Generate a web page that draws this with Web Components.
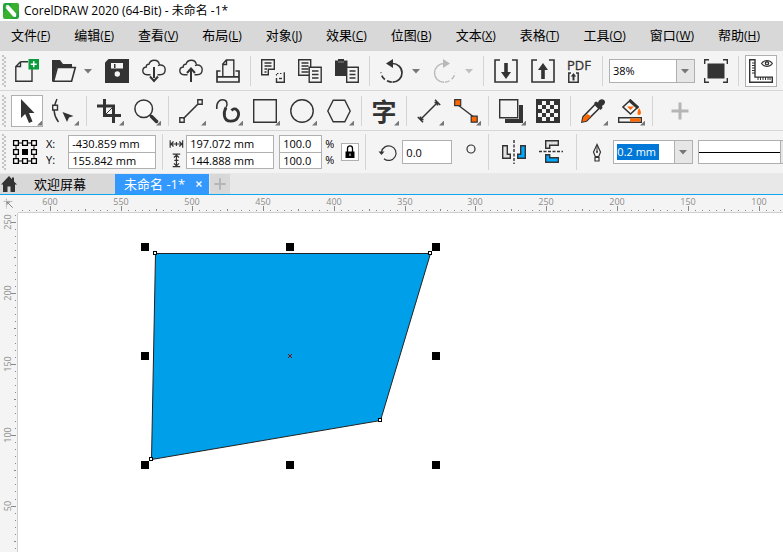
<!DOCTYPE html>
<html lang="zh-CN">
<head>
<meta charset="utf-8">
<title>CorelDRAW 2020 (64-Bit) - 未命名 -1*</title>
<style>
html, body { margin: 0; height: 100%; background: #fff; overflow: hidden; }
body { font: 11px/16px "Open Sans", "Noto Sans CJK SC", sans-serif; color: #000; }
</style>
</head>
<body>
<cd-app></cd-app>
<script>
const S = 'fill="none" stroke="#333" stroke-width="1.4"';
const ICONS = {
  new: `<path d="M5.5 2.7H13M17 10v12.3H.8V7.5L5.5 2.7M5.5 2.7V7.5H1" ${S}/><path d="M13.5 0h10.5v10.5H13.5z" fill="#0a9b3c"/><path d="M18.7 2.2v6M15.7 5.2h6" stroke="#fff" stroke-width="1.5"/>`,
  open: `<path d="M0 22V1h8l3 4h9v3H5L1 23z" fill="#333"/><path d="M5.3 8.5h18L19.6 22.3H1.6z" fill="#f4f4f4" stroke="#333" stroke-width="1.6"/>`,
  save: `<path d="M0 3.5L3.500 0H24v24H0z" fill="#333"/><path d="M6 4h12v5.500H6z" fill="#f4f4f4"/><path d="M9 5h1.500v4H9z" fill="#333"/><circle cx="12.300" cy="15" r="2.700" fill="#f4f4f4"/>`,
  clouddown: `<path d="M8.500 15.800H5C2.500 15.500.8 14 .8 11.800.8 9.600 2.300 8.200 4.300 8 4 6.400 5 5 6.900 5.200 7.800 2.500 9.700 1.200 12.200 1.200c3 0 4.900 2 5.200 4.800 3.500-.4 5.800 1.600 5.800 4.600 0 2.900-1.900 5.200-5.200 5.200h-2.500M17.400 6l-1.400.6" ${S}/><path d="M12 8v11" stroke="#333" stroke-width="2"/><path d="M8 17.500L12 22l4-4.500" fill="none" stroke="#333" stroke-width="2"/>`,
  cloudup: `<path d="M8.500 15.800H5C2.500 15.500.8 14 .8 11.800.8 9.600 2.300 8.200 4.300 8 4 6.400 5 5 6.900 5.200 7.800 2.500 9.700 1.200 12.200 1.200c3 0 4.900 2 5.200 4.800 3.500-.4 5.800 1.600 5.800 4.600 0 2.900-1.900 5.200-5.200 5.200h-2.500M17.400 6l-1.400.6" ${S}/><path d="M12 10v13" stroke="#333" stroke-width="2"/><path d="M8 14l4-4.500 4 4.500" fill="none" stroke="#333" stroke-width="2"/>`,
  print: `<path d="M6.800 17V5l3.500-4h7.500v16M10.500 1v4.500H7" ${S}/><path d="M4.500 12H1v11h22V12h-3.500M1 17.800h22" fill="none" stroke="#333" stroke-width="1.700"/>`,
  cut: `<path d="M.7.700h12.600v9.600H7.300v5.500H.7z" ${S}/><path d="M3.500 4h7M3.500 7h7M3.500 10h2.500M3.500 13h2" ${S}/><path d="M16 14.500h6M15.500 15v2" fill="none" stroke="#333" stroke-width="1.200" stroke-dasharray="1.500 1.500"/><path d="M15.500 19v4.300h7.800v-10" ${S}/><path d="M18 19.500h3" ${S}/>`,
  copy: `<path d="M.7.700h12v15.600H.7z" ${S}/><path d="M3.500 4h7M3.500 7h7M3.500 10h7M3.500 13h7" ${S} /><path d="M11.200 8.200h12v15h-12z" fill="#f4f4f4" stroke="#333" stroke-width="1.400"/><path d="M14 12h6.500M14 15.500h6.500M14 19h6.500" ${S}/>`,
  paste: `<path d="M0 1.500h3V0h6v1.500h3.500V8H11v9H0z" fill="#333"/><path d="M3 3h6" stroke="#888"/><path d="M11.700 8.200h11.600v15H11.700z" fill="#f4f4f4" stroke="#333" stroke-width="1.400"/><path d="M14.500 12h6M14.500 15.500h6M14.500 19h6" ${S}/>`,
  undo: `<path d="M9 4.500h3.500c5 0 9.500 4 9.500 9.300 0 5.200-4 9.400-9.500 9.400" fill="none" stroke="#333" stroke-width="1.700"/><path d="M11.800 23.200C6 22.500 1.500 19 1 13.500" fill="none" stroke="#333" stroke-width="1.700" stroke-dasharray="5 2.500"/><path d="M6 4.500L13 0v9z" fill="#333"/>`,
  redo: `<path d="M14 4.500h-3c-5 0-9.500 4-9.500 9.300 0 5.200 4 9.400 9.500 9.400" fill="none" stroke="#b9b9b9" stroke-width="1.400"/><path d="M11.800 23.200C17.500 22.500 21.500 19 22 13.500" fill="none" stroke="#b9b9b9" stroke-width="1.400" stroke-dasharray="5 2.500"/><path d="M17 4.500L10 0v9z" fill="#b9b9b9"/>`,
  import: `<path d="M6 1H1v22h22V1h-5" fill="none" stroke="#333" stroke-width="1.600"/><path d="M10.200 4h3.600v9H17l-5 7-5-7h3.200z" fill="#333"/>`,
  export: `<path d="M6 1H1v22h22V1h-5" fill="none" stroke="#333" stroke-width="1.600"/><path d="M10.200 20h3.600v-9H17l-5-7-5 7h3.200z" fill="#333"/>`,
  pdf: `<text x="-1" y="11" font-family="Open Sans, sans-serif" font-size="13" fill="#333" stroke="#333" stroke-width="0.300">PDF</text><path d="M3 14H.800v9.200h9.400V14H8" fill="none" stroke="#333" stroke-width="1.500"/><path d="M4.500 21.500V17.500H2.800L5.500 14l2.700 3.500H6.500v4z" fill="#333"/>`,
  full: `<path d="M3.500 4.500h17v15h-17z" fill="#333"/><path d="M.7 5V.7H5M19 .7h4.300V5M23.300 19v4.300H19M5 23.300H.7V19" ${S}/>`,
  ruler: `<path d="M.7.700H6v17.400h17.300v5.200H.7z" ${S}/><path d="M3 4h3M3 6.500h3M3 9h3M3 11.500h3M3 14h3M9 18v3M11.500 18v3M14 18v3M16.500 18v3M19 18v3M21 18v3" stroke="#333" stroke-width="1"/><path d="M12.500 4.500c3-4 8-4 10.900 0-3 4-8 4-10.900 0z" fill="none" stroke="#333" stroke-width="1.200"/><circle cx="18" cy="4.300" r="1.600" ${S}/>`,
  pick: `<path d="M6 0v19l4.200-4 3.800 9 3.500-1.500L14 14h5.500z" fill="#333"/>`,
  shape: `<path d="M5 0C1 8 1 16 6.500 23" ${S}/><path d="M.7 6.200h4.800V11H.7z" fill="#f4f4f4" stroke="#333" stroke-width="1.400"/><path d="M10.500 13l11 4-4.500 1.500-2 4.500z" fill="#333"/>`,
  crop: `<path d="M0 7h16.500V24M7.500 0v16.500H24" fill="none" stroke="#333" stroke-width="3"/><path d="M17 7L8 16" stroke="#333" stroke-width="1"/>`,
  zoom: `<circle cx="9.700" cy="9.700" r="8.800" fill="#f8f8f8" stroke="#333" stroke-width="1.500"/><path d="M16 16l2 2" stroke="#333" stroke-width="2"/><path d="M17.500 17.500l5 5" stroke="#333" stroke-width="3.500" stroke-linecap="round"/>`,
  line: `<path d="M4.500 19.500l14-14" stroke="#333" stroke-width="1.600"/><path d="M.8 18.800h4.400v4.400H.8zM18.800.800h4.400v4.400h-4.400z" ${S}/>`,
  curve: `<path d="M.8 10C0 3.500 3.500.8 6.500.8 11 .8 12 4.500 10 8.500" fill="none" stroke="#333" stroke-width="1.500"/><path d="M10 8.500C7 14 7.500 22.200 14.500 22.200c8.500 0 9.500-8 6.500-11.200-1.800-1.700-4-1.200-5.500.5" fill="none" stroke="#333" stroke-width="2.800"/>`,
  rect: `<path d="M.7.700h22.600v22.600H.7z" ${S}/>`,
  ellipse: `<circle cx="12" cy="12" r="11.200" ${S}/>`,
  hexagon: `<path d="M6.200 1.200h11.600L23.200 12l-5.400 10.800H6.200L.8 12z" ${S}/>`,
  text: `<text x="-0.500" y="21.500" font-family="Noto Sans CJK SC, sans-serif" font-weight="700" font-size="25" fill="#333">字</text>`,
  dimension: `<path d="M3.500 20.500l17-17M.8 18l5.200 5.200M18 .8l5.200 5.200M3.500 17.500v3h3M17.500 3.500h3v3" fill="none" stroke="#333" stroke-width="1.500"/>`,
  connector: `<path d="M4 6l17 13" stroke="#333" stroke-width="1.400"/><path d="M.7.700h6v6h-6zM17.200 17.200h6v6h-6z" fill="#f60" stroke="#333" stroke-width="1.200"/>`,
  shadow: `<path d="M6 21h18V6h-4v14H6z" fill="#333"/><path d="M6 21h18v3H6zM21 6h3v18h-3z" fill="#333"/><path d="M.7.700h18v18H.7z" fill="#f4f4f4" stroke="#333" stroke-width="1.400"/>`,
  checker: `<path d="M0 0h24v24H0z" fill="#333"/><path d="M6 2h4v4H6zM14 2h4v4h-4zM2 6h4v4H2zM10 6h4v4h-4zM18 6h4v4h-4zM6 10h4v4H6zM14 10h4v4h-4zM2 14h4v4H2zM10 14h4v4h-4zM18 14h4v4h-4zM6 18h4v4H6zM14 18h4v4h-4z" fill="#f4f4f4"/>`,
  dropper: `<path d="M14 5.500L2 18l-1 5 4.500-1L18 9.500z" fill="#f8f8f8" stroke="#333" stroke-width="1.600"/><path d="M6 15l-4 4-.7 3.700L5 22l5-5z" fill="#f60"/><path d="M13 4l2-1.500 2 1C18 .500 21-.5 23 1s1 4.500-2 6l.500 2-2 2z" fill="#333"/>`,
  fill: `<path d="M12.500 1L20 8l-7.500 7L5 8z" fill="#f8f8f8" stroke="#333" stroke-width="1.600"/><path d="M12 0l9 8-2 2-8.500-7.500z" fill="#333"/><path d="M9 7.500h7l-3.500 3.500z" fill="#f60"/><path d="M21 9c3 4 2 7 0 7s-2-3 0-7z" fill="#f60"/><path d="M.7 18.700h22.600v4.600H.7z" fill="#f4f4f4" stroke="#333" stroke-width="1.400"/><path d="M12 19.400h10.600v3.200H12z" fill="#f60"/>`,
  plus: `<path d="M12 3.500v17M3.500 12h17" stroke="#b5b5b5" stroke-width="3"/>`,
  anchors: `<path d="M3 3h18v18H3z" fill="none" stroke="#000"/><g fill="#fff" stroke="#000" stroke-width="1.300"><path d="M.6.600h4.800v4.800H.6zM9.600.600h4.800v4.800H9.600zM18.600.600h4.800v4.800h-4.800zM.6 9.600h4.800v4.800H.6zM18.600 9.600h4.800v4.800h-4.800zM.6 18.600h4.800v4.800H.6zM9.600 18.600h4.800v4.800H9.600zM18.600 18.600h4.800v4.800h-4.800z"/></g><path d="M9 9h6v6H9z"/>`,
  mirrorh: `<path d="M.7 5.700h4.600v8.600h3v4H.7z" fill="#e2e2e2" stroke="#333" stroke-width="1.400"/><path d="M23.300 5.700h-4.600v8.600h-3v4h7.600z" fill="#0af" stroke="#333" stroke-width="1.400"/><path d="M12 0v24" stroke="#333" stroke-width="1.400" stroke-dasharray="3 1.500"/>`,
  mirrorv: `<path d="M19.300.7v4.600h-8.600v3h-4V.7z" fill="#e2e2e2" stroke="#333" stroke-width="1.400"/><path d="M19.300 22.300v-4.600h-8.600v-3h-4v7.600z" fill="#0af" stroke="#333" stroke-width="1.400"/><path d="M0 11.500h24" stroke="#333" stroke-width="1.400" stroke-dasharray="3 1.500"/>`,
  rotate: `<path d="M8 18.700A7.300 7.300 0 1 0 5.500 12" fill="none" stroke="#333" stroke-width="1.200"/><path d="M2.500 11.500h6L5.500 15z" fill="#333"/>`,
  pen: `<path d="M12 4.500L8.500 12l1.700 4.500h3.600l1.700-4.500z" fill="none" stroke="#333" stroke-width="1.200"/><path d="M12 5v7" stroke="#333"/><circle cx="12" cy="12" r="1" fill="#333"/><path d="M10 17.500h4v3.500h-4z" fill="none" stroke="#333" stroke-width="1.200"/>`,
  degree: `<circle cx="12" cy="9" r="4" fill="none" stroke="#333" stroke-width="1.200"/>`,
  width: `<path d="M5 7.500v9M20 7.500v9M5 12h15M9 9L6 12l3 3M16 9l3 3-3 3M12.500 9.500v5" fill="none" stroke="#333" stroke-width="1.400"/>`,
  height: `<path d="M8 5h9M8 20h9M12.500 5v15M9.500 9l3-3 3 3M9.500 16l3 3 3-3M10 12.500h5" fill="none" stroke="#333" stroke-width="1.400"/>`,
  lock: `<path d="M9.500 12V8.500c0-3.500 5-3.500 5 0V12" fill="none" stroke="#000" stroke-width="1.300"/><path d="M7.500 11.500h9V18h-9z"/><path d="M12 13.500v2.500" stroke="#fff"/>`,
  home: `<path d="M12 4L4 12.500h2V20h4.500v-5.500h3V20H18v-7.500h2l-3-3V5.500h-2v1.700z" fill="#333"/>`,
  close: `<path d="M9.500 9.500l5 5M14.500 9.500l-5 5" stroke="#fff" stroke-width="1.300"/>`,
  origin: `<path d="M5 8.500h12M8.500 5v13" fill="none" stroke="#888" stroke-dasharray="1.500 1"/><path d="M9 9l8 8M9.500 13V9.500h4" fill="none" stroke="#777" stroke-width="1.200"/>`,
  logo: `<rect width="24" height="24" rx="3.500" fill="#1fa53a"/><path d="M0 15L15 0h5.500Q24 0 24 3.500V12L12 24H3.500Q0 24 0 20.500z" fill="#4cb82c" opacity=".6"/><path d="M5 3.500l3-.5 12 13-.5 5-4-.5L4 7.500z" fill="#fff"/><path d="M4 4l4 .5-3 3z" fill="#cfe9c4"/>`,
  chevron: `<path d="M8 10h8l-4 4.500z" fill="#777"/>`,
  chevronoff: `<path d="M8 10h8l-4 4.500z" fill="#c0c0c0"/>`
};

function define(name, css, html, after) {
  customElements.define(name, class extends HTMLElement {
    connectedCallback() {
      if (this.shadowRoot) return;
      const t = document.createElement('template');
      t.innerHTML = `<style>*{box-sizing:border-box}${css}</style>` + (typeof html === 'function' ? html(this) : html);
      this.attachShadow({ mode: 'open' }).append(t.content.cloneNode(true));
      if (after) after(this);
    }
  });
}

define('cd-icon',
  ':host{display:block;flex:none;width:24px;height:24px} svg{display:block;width:100%;height:100%;overflow:visible}',
  el => `<svg viewBox="0 0 24 24" aria-hidden="true">${ICONS[el.getAttribute('name')]}</svg>`);

define('tool-button',
  `:host{display:block;flex:none}
   button{position:relative;display:block;width:32px;height:32px;padding:3px;border:1px solid transparent;background:none}
   :host([wide]) button{width:42px;padding:3px 8px}
   :host([active]) button{background:#fff;border-color:#b0b0b0}
   :host([flyout]) button::after{content:"";position:absolute;right:0;bottom:0;width:5px;height:5px;clip-path:polygon(100% 0,100% 100%,0 100%);background:#777}`,
  el => `<button type="button" aria-label="${el.getAttribute('label')}"><cd-icon name="${el.getAttribute('icon')}"></cd-icon></button>`);

define('drop-arrow',
  ':host{display:block;flex:none;width:16px;margin-left:-5px} button{display:block;width:16px;height:32px;padding:4px 0;border:0;background:none} cd-icon{margin-left:-4px}',
  el => `<button type="button" aria-label="更多" ${el.hasAttribute('off') ? 'disabled' : ''}><cd-icon name="${el.hasAttribute('off') ? 'chevronoff' : 'chevron'}"></cd-icon></button>`);

define('bar-separator', ':host{display:block;flex:none;width:3px;height:32px;padding:1px} i{display:block;height:100%;width:1px;background:#d4d4d4}', '<i></i>');

define('tool-bar',
  `:host{display:flex;align-items:center;gap:5px;height:40px;border-top:1px solid #d6d6d6;background:#f4f4f4;padding-left:2px;overflow:hidden}
   i{flex:none;width:4px;height:32px;background:radial-gradient(circle at 1px 1px,#c4c4c4 0 1px,transparent 1px) 0 0/4px 4px,radial-gradient(circle at 1px 1px,#c4c4c4 0 1px,transparent 1px) 2px 2px/4px 4px}
   :host([tall]){height:43px;gap:0} :host([tall]) i{margin-right:7px;height:36px}`,
  '<i></i><slot></slot>');

define('text-field',
  `:host{display:block;width:50px}
   input{display:block;width:100%;height:24px;margin:0;padding:0 3px;border:1px solid #b0b0b0;background:#fff;font:inherit;color:#000;border-radius:0;outline:0}`,
  el => `<input aria-label="${el.getAttribute('label')}" value="${el.getAttribute('value')}">`);

define('field-pair',
  `:host{display:block;flex:none;width:var(--w,88px);background:#fff;border:1px solid #b0b0b0}
   input{display:block;width:100%;height:16px;margin:0;padding:0 3px;border:0;background:none;font:inherit;color:#000;outline:0}
   input+input{border-top:1px solid #b0b0b0}`,
  el => el.getAttribute('values').split('|').map((v, i) => `<input aria-label="${el.getAttribute('labels').split('|')[i]}" value="${v}">`).join(''));

define('label-pair', ':host{display:grid;grid-template-rows:16px 16px;justify-items:center;align-items:center;flex:none;overflow:hidden}', '<slot></slot>');

define('combo-box',
  `:host{display:flex;flex:none;width:86px;height:24px;border:1px solid #b0b0b0;background:#fff;position:relative}
   select,input{flex:1;min-width:0;margin:0;border:0;border-radius:0;background:none;font:inherit;color:#000;padding:0 3px;outline:0}
   select{appearance:none}
   input{flex:none;width:42px;height:16px;align-self:center;margin:0 auto 0 3px;padding:0;background:#0078d7;color:#fff}
   button,span{width:18px;padding:0;border:0;border-left:1px solid #b0b0b0;background:#e6e6e6;display:block}
   span{position:absolute;right:0;top:0;height:22px;pointer-events:none}
   cd-icon{margin:-1px -4px}
   b{flex:1;align-self:center;height:1px;background:#000}`,
  el => {
    const v = el.getAttribute('value'), l = el.getAttribute('label');
    if (el.getAttribute('kind') === 'select') return `<select aria-label="${l}"><option>${v}</option></select><span><cd-icon name="chevron"></cd-icon></span>`;
    if (el.getAttribute('kind') === 'edit') return `<input aria-label="${l}" value="${v}"><button type="button" aria-label="展开"><cd-icon name="chevron"></cd-icon></button>`;
    return `<b></b><button type="button" aria-haspopup="listbox" aria-label="${l}"><cd-icon name="chevron"></cd-icon></button>`;
  });

define('title-bar',
  ':host{display:flex;align-items:center;gap:5px;height:21px;padding-left:3px;background:#fff;font-size:12px} cd-icon{width:16px;height:16px}',
  '<cd-icon name="logo"></cd-icon><slot></slot>');

define('menu-bar',
  `:host{display:flex;align-items:center;gap:24px;height:29px;padding-left:11px;background:#d8d8d8;overflow:hidden}
   button{flex:none;padding:0;border:0;background:none;color:#000;font:13px/20px "Open Sans","Noto Sans CJK SC",sans-serif;white-space:nowrap}
   small{font-size:12px} u{text-underline-offset:1px}`,
  ['文件F', '编辑E', '查看V', '布局L', '对象J', '效果C', '位图B', '文本X', '表格T', '工具O', '窗口W', '帮助H']
    .map(m => `<button type="button">${m.slice(0, 2)}<small>(<u>${m[2]}</u>)</small></button>`).join(''));

define('document-tabs',
  `:host{display:flex;height:22px;border-top:1px solid #e8e8e8;border-bottom:1px solid #0fa5f0;background:#e8e8e8;font-size:13px}
   button{display:flex;align-items:center;height:20px;padding:0;border:0;background:#d8d8d8;color:#000;font:13px/20px "Open Sans","Noto Sans CJK SC",sans-serif;white-space:nowrap}
   .home{width:20px} .home cd-icon{margin-left:-3px}
   .page{padding:0 29px 0 14px}
   .tab{display:flex;background:#39f;padding-left:9px;margin-right:1px}
   .tab button{background:none;color:#fff} .tab .x{width:20px;margin-left:4px;justify-content:center} .x cd-icon{flex:none}
   .add{width:20px;justify-content:center} .add cd-icon{width:16px;height:16px}`,
  `<button class="home" type="button" aria-label="主页"><cd-icon name="home"></cd-icon></button>
   <button class="page" type="button">欢迎屏幕</button>
   <div class="tab"><button type="button">未命名 -1*</button><button class="x" type="button" aria-label="关闭"><cd-icon name="close"></cd-icon></button></div>
   <button class="add" type="button" aria-label="新建"><cd-icon name="plus"></cd-icon></button>`);

// Draws only the marks and numbers that fit in the ruler's current length.
function drawScale(el) {
  const v = el.getAttribute('dir') === 'y';
  const start = +el.getAttribute('start'), first = +el.getAttribute('first'), step = 70.9;
  const length = v ? el.clientHeight : el.clientWidth;
  const marks = [];
  for (let i = -9; start + i * step / 10 < length; i++) {
    const p = Math.round(start + i * step / 10), k = ((i % 10) + 10) % 10;
    if (p < 0) continue;
    const len = k === 0 ? 5 : k === 5 ? 2 : 1;
    marks.push(v ? `<rect x="${16 - len}" y="${p}" width="${len}" height="1" fill="#888"/>` : `<rect x="${p}" y="${16 - len}" width="1" height="${len}" fill="#888"/>`);
    if (k === 0 && p + 9 < length) {
      const n = Math.abs(first - i * 5);
      marks.push(v ? `<text transform="translate(11 ${p}) rotate(-90)">${n}</text>` : `<text x="${p}" y="10">${n}</text>`);
    }
  }
  el.shadowRoot.querySelector('svg').innerHTML = marks.join('');
}

define('ruler-scale',
  ':host{display:block;background:#f4f4f4;overflow:hidden;min-width:0;min-height:0} :host([dir=x]){border-bottom:1px solid #cfcfcf} :host([dir=y]){border-right:1px solid #cfcfcf} svg{display:block;width:100%;height:100%} text{font:9px "Open Sans",sans-serif;fill:#8c8c8c;text-anchor:middle}',
  '<svg aria-hidden="true"></svg>',
  el => new ResizeObserver(() => drawScale(el)).observe(el));

define('drawing-canvas',
  ':host{display:block;background:#fff;min-width:0;min-height:0;overflow:hidden} svg{display:block;width:100%;height:100%}',
  () => {
    const handles = [127, 272, 418].flatMap(x => [34, 143, 252].map(y => [x, y])).filter(([x, y]) => x !== 272 || y !== 143);
    const nodes = [[137, 40], [412, 40], [362, 207], [133, 246]];
    return `<svg role="img" aria-label="四边形">
      <path d="M137.500 40.500H412.500L362.500 207.500 133.500 246.500z" fill="#009fe9" stroke="#222"/>
      ${handles.map(([x, y]) => `<rect x="${x - 4}" y="${y - 4}" width="8" height="8"/>`).join('')}
      ${nodes.map(([x, y]) => `<rect x="${x - 1.5}" y="${y - 1.5}" width="3" height="3" fill="#fff" stroke="#000"/>`).join('')}
      <path d="M270 141l4 4M274 141l-4 4" stroke="#7a1010"/></svg>`;
  });

define('work-area',
  ':host{display:grid;grid-template:18px 1fr/18px 1fr;flex:1;min-height:0} div{background:#f4f4f4;overflow:hidden} cd-icon{width:18px;height:18px}',
  `<div><cd-icon name="origin"></cd-icon></div><ruler-scale dir="x" start="32" first="600"></ruler-scale>
   <ruler-scale dir="y" start="9" first="250"></ruler-scale><drawing-canvas></drawing-canvas>`);

const tb = (icon, label, extra = '') => `<tool-button icon="${icon}" label="${label}" ${extra}></tool-button>`;
const sep = '<bar-separator></bar-separator>';

define('cd-app',
  `:host{display:flex;flex-direction:column;height:100vh}
   #props>*{flex:none}
   #props bar-separator{height:38px}
   .lock{width:18px;height:18px;margin:0 5px 0 7px;padding:0;border:1px solid #b0b0b0;background:#fff;overflow:hidden} .lock cd-icon{margin:-4px}
   .plain{width:24px;height:24px;padding:0;border:0;background:none}
   .small{width:20px;height:20px}`,
  `<title-bar>CorelDRAW 2020 (64-Bit) - 未命名 -1*</title-bar>
   <menu-bar></menu-bar>
   <tool-bar>
     ${tb('new', '新建')}${tb('open', '打开')}<drop-arrow></drop-arrow>${tb('save', '保存')}${tb('clouddown', '从云中打开')}${tb('cloudup', '保存到云')}${tb('print', '打印')}${sep}
     ${tb('cut', '剪切')}${tb('copy', '复制')}${tb('paste', '粘贴')}${sep}${tb('undo', '撤消')}<drop-arrow></drop-arrow>${tb('redo', '重做')}<drop-arrow off></drop-arrow>${sep}
     ${tb('import', '导入')}${tb('export', '导出')}${tb('pdf', '发布为 PDF')}${sep}<combo-box kind="select" value="38%" label="缩放级别"></combo-box>${tb('full', '全屏预览')}${sep}${tb('ruler', '显示标尺', 'active')}
   </tool-bar>
   <tool-bar>
     ${tb('pick', '选择', 'active flyout')}${tb('shape', '形状', 'flyout')}${sep}${tb('crop', '裁剪', 'flyout')}${tb('zoom', '缩放', 'flyout')}${sep}
     ${tb('line', '手绘', 'flyout')}${tb('curve', '艺术笔', 'flyout')}${tb('rect', '矩形', 'flyout')}${tb('ellipse', '椭圆形', 'flyout')}${tb('hexagon', '多边形', 'flyout')}${sep}
     ${tb('text', '文本', 'flyout')}${sep}${tb('dimension', '度量', 'flyout')}${tb('connector', '连接器', 'flyout')}${sep}${tb('shadow', '阴影', 'flyout')}${tb('checker', '透明度')}${sep}
     ${tb('dropper', '滴管', 'flyout')}${tb('fill', '填充', 'flyout')}${sep}${tb('plus', '自定义', 'wide')}
   </tool-bar>
   <tool-bar tall id="props">
     <cd-icon name="anchors"></cd-icon>
     <label-pair style="margin:0 13px 0 9px;justify-items:start"><span>X:</span><span>Y:</span></label-pair>
     <field-pair labels="X|Y" values="-430.859 mm|155.842 mm"></field-pair>
     <bar-separator style="margin:0 2px 0 5px"></bar-separator>
     <label-pair><cd-icon class="small" name="width"></cd-icon><cd-icon class="small" name="height"></cd-icon></label-pair>
     <field-pair labels="宽度|高度" values="197.072 mm|144.888 mm"></field-pair>
     <field-pair labels="水平缩放|垂直缩放" values="100.0|100.0" style="--w:43px;margin:0 3px 0 5px"></field-pair>
     <label-pair><span>%</span><span>%</span></label-pair>
     <button class="lock" type="button" aria-label="锁定比率"><cd-icon name="lock"></cd-icon></button>
     <bar-separator style="margin-right:9px"></bar-separator>
     <cd-icon name="rotate"></cd-icon>
     <text-field label="旋转角度" value="0.0" style="margin:0 7px 0 2px"></text-field>
     <cd-icon name="degree"></cd-icon>
     <bar-separator style="margin:0 12px 0 4px"></bar-separator>
     <button class="plain" type="button" aria-label="水平镜像"><cd-icon name="mirrorh"></cd-icon></button>
     <button class="plain" type="button" aria-label="垂直镜像" style="margin-left:13px"><cd-icon name="mirrorv"></cd-icon></button>
     <bar-separator style="margin:0 7px 0 12px"></bar-separator>
     <cd-icon name="pen"></cd-icon>
     <combo-box kind="edit" value="0.2 mm" label="轮廓宽度" style="width:80px;margin:0 5px 0 4px"></combo-box>
     <combo-box kind="line" label="线条样式" style="width:101px"></combo-box>
   </tool-bar>
   <document-tabs></document-tabs>
   <work-area></work-area>`);
</script>
</body>
</html>
